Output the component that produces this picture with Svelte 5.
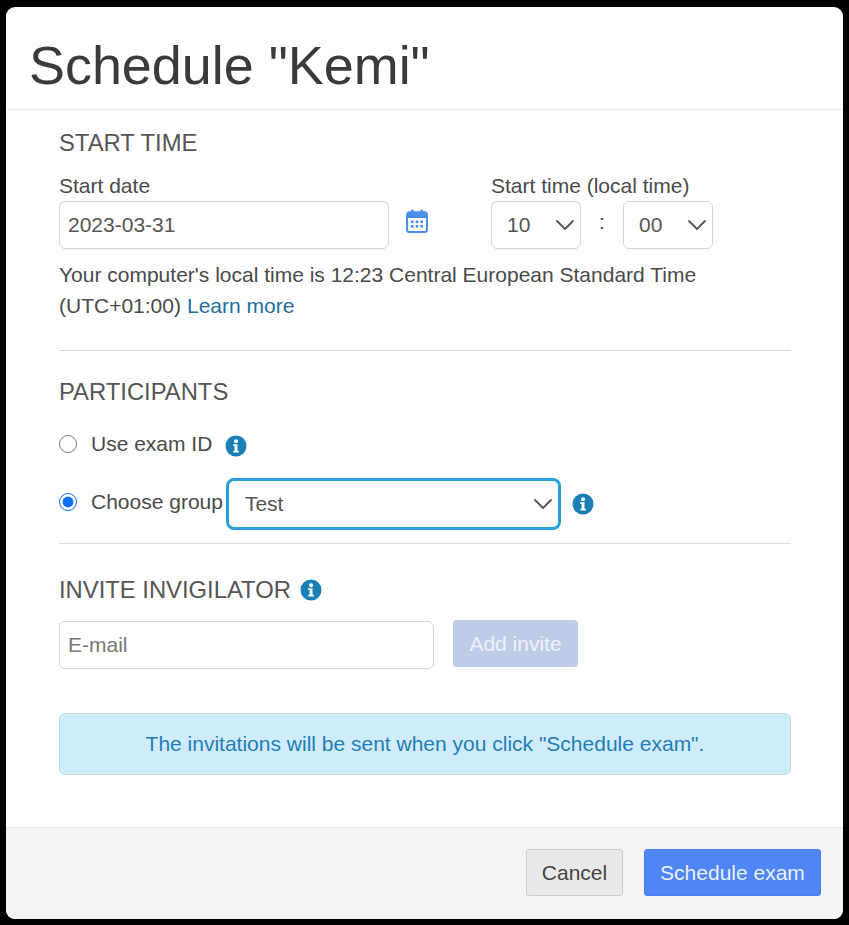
<script>
  let mode = $state('group');
  let group = $state('Test');
  const hours = ['09', '10', '11', '12'];
  const minutes = ['00', '15', '30', '45'];
</script>

{#snippet info()}
  <svg class="info" viewBox="0 0 22 22" width="22" height="22" aria-hidden="true">
    <circle cx="11" cy="11" r="10.5" fill="#1a7fb5" />
    <circle cx="11" cy="6.3" r="2" fill="#fff" />
    <path d="M8.2 9.2h4.3v6.6h1.3v1.7H8.3v-1.7h1.3v-4.9H8.2z" fill="#fff" />
  </svg>
{/snippet}

{#snippet chevron()}
  <svg class="chevron" viewBox="0 0 20 12" width="20" height="12" aria-hidden="true">
    <path d="M2 2l8 8 8-8" fill="none" stroke="#555" stroke-width="1.8" stroke-linecap="round" stroke-linejoin="round" />
  </svg>
{/snippet}

<div class="page">
  <div class="modal">
    <header>
      <h1>Schedule "Kemi"</h1>
    </header>

    <main>
      <section class="start">
        <h2>START TIME</h2>
        <div class="when">
          <div class="date">
            <label for="date">Start date</label>
            <div class="date-row">
              <input id="date" class="field date-input" value="2023-03-31" />
              <svg class="cal" viewBox="0 0 22 24" width="22" height="24" aria-hidden="true">
                <rect x="1" y="3.5" width="20" height="19.5" rx="2.5" fill="#fff" stroke="#4a8fe7" stroke-width="2" />
                <path d="M1 4.5a2 2 0 0 1 2-2h16a2 2 0 0 1 2 2V9H1z" fill="#4a8fe7" />
                <rect x="5" y="0.5" width="2.6" height="5" rx="1" fill="#4a8fe7" />
                <rect x="14.4" y="0.5" width="2.6" height="5" rx="1" fill="#4a8fe7" />
                <g fill="#4a8fe7">
                  <rect x="5" y="11.5" width="2.6" height="2.6" /><rect x="9.7" y="11.5" width="2.6" height="2.6" /><rect x="14.4" y="11.5" width="2.6" height="2.6" />
                  <rect x="5" y="16" width="2.6" height="2.6" /><rect x="9.7" y="16" width="2.6" height="2.6" /><rect x="14.4" y="16" width="2.6" height="2.6" />
                </g>
              </svg>
            </div>
          </div>
          <div class="time">
            <label for="hour">Start time (local time)</label>
            <div class="time-row">
              <div class="select-wrap small">
                <select id="hour" class="field" value="10">
                  {#each hours as h}<option>{h}</option>{/each}
                </select>
                {@render chevron()}
              </div>
              <span class="colon">:</span>
              <div class="select-wrap small">
                <select class="field" value="00">
                  {#each minutes as m}<option>{m}</option>{/each}
                </select>
                {@render chevron()}
              </div>
            </div>
          </div>
        </div>
        <div class="tz">
          <div>Your computer's local time is 12:23 Central European Standard Time</div>
          <div class="tz-second">
            <span>(UTC+01:00)</span>
            <a href="#learn">Learn more</a>
          </div>
        </div>
      </section>

      <section class="participants">
        <h2>PARTICIPANTS</h2>
        <div class="option first">
          <label class="radio">
            <input type="radio" name="who" value="id" bind:group={mode} />
            Use exam ID
          </label>
          {@render info()}
        </div>
        <div class="option second">
          <label class="radio">
            <input type="radio" name="who" value="group" bind:group={mode} />
            Choose group
          </label>
          <div class="select-wrap wide">
            <select class="field focused" bind:value={group}>
              <option>Test</option>
            </select>
            {@render chevron()}
          </div>
          {@render info()}
        </div>
      </section>

      <section class="invite">
        <h2 class="with-info">INVITE INVIGILATOR {@render info()}</h2>
        <div class="invite-row">
          <input class="field email" placeholder="E-mail" />
          <button class="add" disabled>Add invite</button>
        </div>
        <div class="notice">The invitations will be sent when you click "Schedule exam".</div>
      </section>
    </main>

    <footer>
      <button class="cancel">Cancel</button>
      <button class="primary">Schedule exam</button>
    </footer>
  </div>
</div>

<style>
  :global(body) {
    background: #000;
  }

  .page {
    box-sizing: border-box;
    width: 849px;
    height: 925px;
    padding: 7px 6px 6px;
    font-family: "Liberation Sans", Arial, sans-serif;
    font-size: 21px;
    line-height: 31px;
    color: #4a4a4a;
  }

  .modal {
    height: 912px;
    background: #fff;
    border-radius: 9px;
    overflow: hidden;
    display: flex;
    flex-direction: column;
  }

  header {
    height: 103px;
    flex: none;
    box-sizing: border-box;
    padding: 28px 23px 0;
    border-bottom: 1px solid #eee;
  }

  h1 {
    margin: 0;
    font-size: 53.9px;
    font-weight: 400;
    line-height: 60px;
    color: #3a3a3a;
  }

  main {
    flex: 1;
    padding: 0 52px 0 53px;
  }

  h2 {
    margin: 0;
    font-size: 23.8px;
    font-weight: 400;
    line-height: 30px;
    color: #555;
  }

  section.start {
    padding: 18px 0 29px;
    border-bottom: 1px solid #ddd;
  }

  .when {
    display: flex;
    margin-top: 15px;
  }

  .date {
    width: 432px;
  }

  label {
    display: block;
    line-height: 26px;
  }

  .date-row {
    display: flex;
    align-items: center;
    gap: 17px;
    margin-top: 2px;
  }

  .field {
    box-sizing: border-box;
    height: 48px;
    border: 1px solid #d4d4d4;
    border-radius: 6px;
    background: #fff;
    padding: 0 8px;
    font: inherit;
    color: #555;
    outline: none;
  }

  .date-input {
    width: 330px;
  }

  .cal {
    margin-top: -8px;
  }

  .time-row {
    display: flex;
    align-items: center;
    margin-top: 2px;
  }

  .select-wrap {
    position: relative;
  }

  .select-wrap select {
    appearance: none;
    width: 100%;
    display: block;
    padding-bottom: 2px;
  }

  .small {
    width: 90px;
  }

  .small select {
    padding-left: 15px;
  }

  .chevron {
    position: absolute;
    right: 6px;
    top: 18px;
    pointer-events: none;
  }

  .colon {
    width: 42px;
    text-align: center;
    margin-top: -7px;
  }

  .tz {
    margin: 10px 0 0;
  }

  .tz-second {
    display: flex;
    gap: 6px;
  }

  a {
    color: #1a6f9f;
    text-decoration: none;
  }

  section.participants {
    padding: 26px 0 13px;
    border-bottom: 1px solid #ddd;
  }

  .option {
    display: flex;
    align-items: center;
  }

  .first {
    margin-top: 26px;
    gap: 13px;
  }

  .second {
    margin-top: 19px;
  }

  .radio {
    display: flex;
    align-items: center;
    gap: 14px;
    white-space: nowrap;
  }

  .first .radio,
  .second .radio {
    transform: translateY(-2px);
  }

  .radio input {
    width: 18px;
    height: 18px;
    margin: 0;
    accent-color: #0d6efd;
  }

  .wide {
    width: 335px;
    margin: 0 11px 0 3px;
  }

  .wide select {
    height: 52px;
    padding-left: 16px;
  }

  .focused {
    border: 3px solid #2a9fdc;
    border-radius: 8px;
  }

  .wide .chevron {
    right: 8px;
    top: 20px;
  }

  section.invite {
    padding-top: 31px;
  }

  .with-info {
    display: flex;
    align-items: center;
    gap: 9px;
  }

  .info {
    flex: none;
  }

  .invite-row {
    display: flex;
    gap: 19px;
    margin-top: 16px;
  }

  .email {
    width: 375px;
  }

  .email::placeholder {
    color: #777;
    opacity: 1;
  }

  button {
    box-sizing: border-box;
    height: 47px;
    border-radius: 3px;
    font: inherit;
  }

  .add {
    width: 125px;
    margin-top: -1px;
    border: 1px solid #bfcce6;
    background: #bfcce6;
    color: #eef1f9;
  }

  .notice {
    box-sizing: border-box;
    margin-top: 44px;
    height: 62px;
    border: 1px solid #b5e0f5;
    border-radius: 6px;
    background: #d0ebf9;
    color: #1f7fb8;
    text-align: center;
    line-height: 60px;
  }

  footer {
    box-sizing: border-box;
    height: 92px;
    flex: none;
    display: flex;
    justify-content: flex-end;
    gap: 21px;
    padding: 21px 22px 0 0;
    background: #f4f4f4;
    border-top: 1px solid #e5e5e5;
  }

  .cancel {
    width: 97px;
    border: 1px solid #ccc;
    background: #e9e9e9;
    color: #444;
  }

  .primary {
    width: 177px;
    border: 1px solid #4a80ec;
    background: #4f85f5;
    color: #eaf1ff;
  }
</style>
